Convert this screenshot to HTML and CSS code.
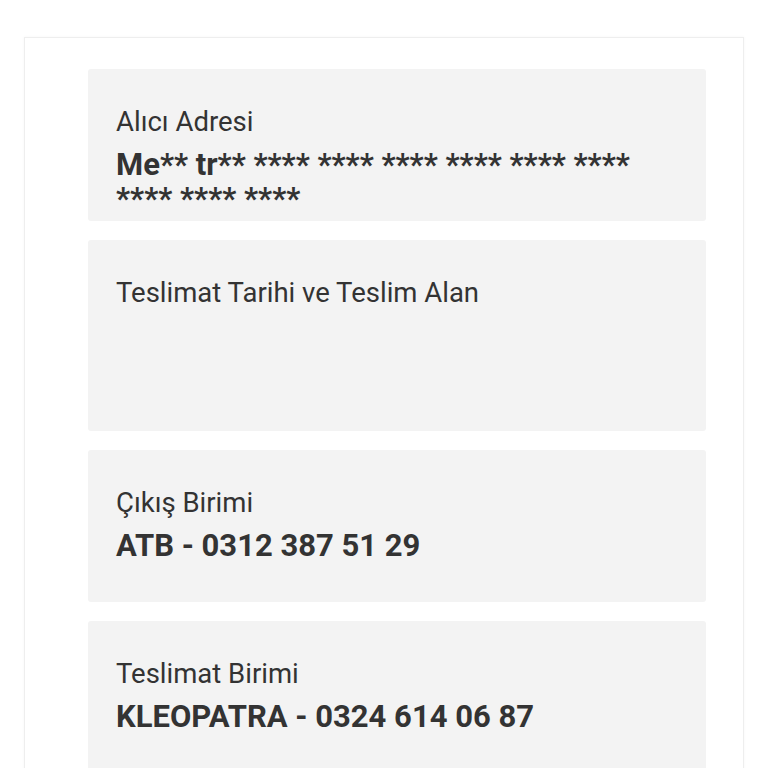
FILE: index.html
```html
<!DOCTYPE html>
<html lang="tr">
<head>
<meta charset="utf-8">
<link rel="stylesheet" href="styles.css">
</head>
<body>
<div class="card">
  <div class="box box-a">
    <div class="label">Alıcı Adresi</div>
    <div class="value">Me** tr** **** **** **** **** **** **** **** **** ****</div>
  </div>
  <div class="box box-b">
    <div class="label">Teslimat Tarihi ve Teslim Alan</div>
  </div>
  <div class="box box-a">
    <div class="label">Çıkış Birimi</div>
    <div class="value">ATB - 0312 387 51 29</div>
  </div>
  <div class="box box-a">
    <div class="label">Teslimat Birimi</div>
    <div class="value">KLEOPATRA - 0324 614 06 87</div>
  </div>
</div>
</body>
</html>
```
FILE: styles.css
```css
html, body {
  margin: 0;
  padding: 0;
  background: #ffffff;
}
body {
  font-family: Roboto, "Noto Sans", sans-serif;
  color: #333333;
}
.card {
  margin: 37px 0 0 24px;
  width: 720px;
  box-sizing: border-box;
  border: 1px solid #eeeeee;
  border-bottom: none;
  padding: 31px 37px 0 63px;
  display: flex;
  flex-direction: column;
  gap: 19px;
  box-shadow: 0 0 3px rgba(0,0,0,0.04);
}
.box {
  background: #f3f3f3;
  border-radius: 3px;
  padding: 36px 28px 0 28px;
  box-sizing: border-box;
}
.box-a { height: 152px; }
.box-b { height: 191px; }
.label {
  font-size: 27.5px;
  line-height: 34px;
  color: #333;
}
.value {
  font-size: 31px;
  font-weight: 700;
  line-height: 34px;
  margin-top: 9px;
  color: #333;
}
```
